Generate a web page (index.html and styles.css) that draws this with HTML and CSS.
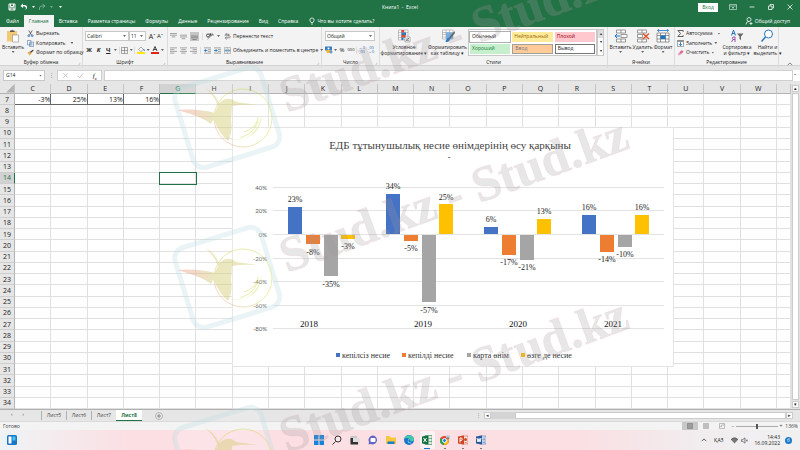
FILE: index.html
```html
<!DOCTYPE html>
<html lang="ru">
<head>
<meta charset="utf-8">
<meta name="viewport" content="width=device-width, initial-scale=1">
<title>Книга1 - Excel</title>
<link rel="stylesheet" href="styles.css">
</head>
<body>
<header class="titlebar">
  <div class="quick">
    <button aria-label="Сохранить"><svg class="i8" viewBox="0 0 16 16"><path d="M2 2h12v12H2zM5 2v5h6V2M4 14v-4h8v4" fill="none" stroke="#fff" stroke-width="2"/></svg></button>
    <button aria-label="Отменить"><svg class="i8" viewBox="0 0 16 16"><path d="M6 1L1 6l5 4V7c5-1 7 1 5 7 6-6 3-11-5-10z" fill="#fff"/></svg></button>
    <i class="tri light"></i>
    <button class="dim" aria-label="Повторить"><svg class="i8" viewBox="0 0 16 16"><path d="M9 2l5 4-5 4M14 6H7q-6 1-4 8" fill="none" stroke="#fff" stroke-width="2"/></svg></button>
    <i class="tri light dim"></i>
    <i class="tri light more"></i>
  </div>
  <div class="doc">Книга1 &nbsp;-&nbsp; Excel</div>
  <div class="win">
    <button class="login">Вход</button>
    <button aria-label="Параметры ленты"><svg class="i8" viewBox="0 0 16 16"><path d="M1 3h14v10H1zM1 6h14M8 12V8M6 10l2-2 2 2" fill="none" stroke="#fff"/></svg></button>
    <button aria-label="Свернуть"><svg class="i8" viewBox="0 0 16 16"><path d="M3 8h10" stroke="#fff" stroke-width="1.500"/></svg></button>
    <button aria-label="Окно"><svg class="i8" viewBox="0 0 16 16"><path d="M3 6h7v7H3zM6 6V3h7v7h-3" fill="none" stroke="#fff" stroke-width="1.500"/></svg></button>
    <button aria-label="Закрыть"><svg class="i8" viewBox="0 0 16 16"><path d="M3 3l10 10M13 3L3 13" stroke="#fff" stroke-width="1.500"/></svg></button>
  </div>
</header>
<nav class="tabs">
  <a href="#">Файл</a><a href="#" class="on">Главная</a><a href="#">Вставка</a><a href="#">Разметка страницы</a><a href="#">Формулы</a><a href="#">Данные</a><a href="#">Рецензирование</a><a href="#">Вид</a><a href="#">Справка</a>
  <a href="#" class="tell"><svg class="i8" viewBox="0 0 16 16"><path d="M6 11Q3 8 4 4q4-5 8 0 1 4-2 7zM6 14h4" fill="none" stroke="#fff" stroke-width="1.500"/></svg>Что вы хотите сделать?</a>
  <a href="#" class="share"><svg class="i8" viewBox="0 0 16 16"><circle cx="8" cy="5" r="4" fill="none" stroke="#fff" stroke-width="1.500"/><path d="M2 15q0-6 6-6M9 13h6M12 10v6" fill="none" stroke="#fff" stroke-width="1.500"/></svg>Общий доступ</a>
</nav>
<main class="ribbon">
  <section class="group">
    <div class="body clip">
      <button class="big"><svg class="i14" viewBox="0 0 28 28"><rect x="2" y="4" width="20" height="21" fill="#f3c876"/><path d="M8 6V3h3q1-3 3 0h3v3z" fill="#555"/><path d="M13 12h12v14H13z" fill="#fff" stroke="#777"/></svg>Вставить<i class="tri"></i></button>
      <div class="stack">
        <button><svg class="i7" viewBox="0 0 16 16"><path d="M4 1l6 10M12 1L6 11" stroke="#555" stroke-width="2"/><circle cx="4" cy="13" r="2" fill="none" stroke="#2b6cb0" stroke-width="2"/><circle cx="12" cy="13" r="2" fill="none" stroke="#2b6cb0" stroke-width="2"/></svg>Вырезать</button>
        <button><svg class="i7" viewBox="0 0 16 16"><path d="M1 1h8v10H1zM6 5h9v10H6z" fill="#fff" stroke="#567ca8" stroke-width="1.500"/><path d="M8 9h5M8 12h5" stroke="#2b6cb0"/></svg>Копировать<i class="tri gap"></i></button>
        <button><svg class="i7" viewBox="0 0 16 16"><path d="M1 8l6-3 3 6-4 4z" fill="#e9a94b"/><path d="M7 6l7-5 1 3-6 5z" fill="#444"/></svg>Формат по образцу</button>
      </div>
    </div>
    <h2>Буфер обмена</h2>
  </section>
  <section class="group">
    <div class="body rows">
      <div class="line"><label class="sel grow"><select aria-label="Шрифт"><option>Calibri</option></select></label><label class="sel size"><select aria-label="Размер"><option>11</option></select></label><button class="let big-a">A<sup>ˆ</sup></button><button class="let">A<sup>ˇ</sup></button></div>
      <div class="line spread"><button class="let"><b>Ж</b></button><button class="let"><b><em>К</em></b></button><button class="let"><b><u>Ч</u></b></button><i class="tri"></i><span class="vr"></span><button aria-label="Границы"><svg class="i7" viewBox="0 0 16 16"><path d="M1 1h14v14H1zM8 1v14M1 8h14" fill="none" stroke="#777" stroke-width="1.500"/></svg></button><i class="tri"></i><span class="vr"></span><button aria-label="Заливка"><svg class="i8" viewBox="0 0 16 16"><path d="M3 7l5-5 5 5-5 4z" fill="#fff" stroke="#555"/><path d="M13 6q3 3 1 4" stroke="#2b6cb0" fill="none" stroke-width="2"/><path d="M0 12h16v4H0z" fill="#ffe800"/></svg></button><i class="tri"></i><button aria-label="Цвет текста"><svg class="i8" viewBox="0 0 16 16"><path d="M4 10l4-9 4 9M5 7h6" fill="none" stroke="#444" stroke-width="2"/><path d="M0 12h16v4H0z" fill="#e32119"/></svg></button><i class="tri"></i></div>
    </div>
    <h2>Шрифт</h2>
  </section>
  <section class="group">
    <div class="body align">
      <div class="rows">
        <div class="line loose"><button aria-label="По верхнему краю"><svg class="i7" viewBox="0 0 16 16"><path d="M0 1h16M0 5h16M4 9h8" stroke="#777" stroke-width="1.500"/></svg></button><button aria-label="По середине"><svg class="i7" viewBox="0 0 16 16"><path d="M0 5h16M0 9h16M4 13h8" stroke="#777" stroke-width="1.500"/></svg></button><button class="pressed" aria-label="По нижнему краю"><svg class="i7" viewBox="0 0 16 16"><path d="M0 7h16M0 11h16M3 15h10" stroke="#666" stroke-width="1.500"/></svg></button><span class="vr"></span><button aria-label="Ориентация"><svg class="i8" viewBox="0 0 16 16"><path d="M3 14L14 4M10 4h4v4" fill="none" stroke="#666" stroke-width="1.500"/><circle cx="4" cy="7" r="3" fill="none" stroke="#444" stroke-width="2"/><path d="M8 2l2 6" stroke="#444" stroke-width="2"/></svg></button><i class="tri"></i></div>
        <div class="line loose"><button aria-label="Слева"><svg class="i7" viewBox="0 0 16 16"><path d="M0 2h16M0 6h10M0 10h16M0 14h10" stroke="#777" stroke-width="1.500"/></svg></button><button aria-label="По центру"><svg class="i7" viewBox="0 0 16 16"><path d="M0 2h16M3 6h10M0 10h16M3 14h10" stroke="#777" stroke-width="1.500"/></svg></button><button aria-label="Справа"><svg class="i7" viewBox="0 0 16 16"><path d="M0 2h16M6 6h10M0 10h16M6 14h10" stroke="#777" stroke-width="1.500"/></svg></button><span class="vr"></span><button aria-label="Уменьшить отступ"><svg class="i7" viewBox="0 0 16 16"><path d="M0 2h16M9 6h7M9 10h7M0 14h16" stroke="#777" stroke-width="1.500"/><path d="M8 8H1M4 5L1 8l3 3" fill="none" stroke="#1672c4" stroke-width="2"/></svg></button><button aria-label="Увеличить отступ"><svg class="i7" viewBox="0 0 16 16"><path d="M0 2h16M9 6h7M9 10h7M0 14h16" stroke="#777" stroke-width="1.500"/><path d="M0 8h7M4 5l3 3-3 3" fill="none" stroke="#1672c4" stroke-width="2"/></svg></button></div>
      </div>
      <div class="rows wraps">
        <div class="line"><button><svg class="i7" viewBox="0 0 16 16"><path d="M2 7l3-6 2 6M9 1v6q4 0 3-3H9M3 11h9q3 0 2-4M6 8l-3 3 3 4" fill="none" stroke="#555" stroke-width="1.500"/></svg>Перенести текст</button></div>
        <div class="line"><button><svg class="i7" viewBox="0 0 16 16"><path d="M1 1h14v14H1zM1 5h14M1 11h14M8 1v4M8 11v4" fill="#fff" stroke="#777"/><path d="M3 8h10M5 6L3 8l2 2M11 6l2 2-2 2" fill="none" stroke="#1672c4" stroke-width="1.500"/></svg>Объединить и поместить в центре<i class="tri"></i></button></div>
      </div>
    </div>
    <h2>Выравнивание</h2>
  </section>
  <section class="group">
    <div class="body rows num">
      <div class="line"><label class="sel grow"><select aria-label="Числовой формат"><option>Общий</option></select></label></div>
      <div class="line spread"><button aria-label="Денежный формат"><svg class="i8" viewBox="0 0 16 16"><rect y="1" width="14" height="8" fill="#3c7fc0"/><circle cx="7" cy="5" r="2" fill="#fff"/><path d="M3 8h7v6H3z" fill="#f2b632"/><path d="M12 9v6M9 12h6" stroke="#3c7fc0" stroke-width="2"/></svg></button><i class="tri"></i><button class="let">%</button><button class="let tiny">000</button><span class="vr"></span><button class="let tiny blue">←0<br>,00</button><button class="let tiny blue">,00<br>→0</button></div>
    </div>
    <h2>Число</h2>
  </section>
  <section class="group">
    <div class="body styles">
      <button class="big"><svg class="i14" viewBox="0 0 28 28"><path d="M3 2h19v20H3zM3 7h19M3 12h19M3 17h19M9 2v20M16 2v20" fill="#fff" stroke="#888"/><path d="M9 2h5v5H9zM9 12h8v5H9z" fill="#e0492f"/><path d="M9 7h9v5H9zM9 17h4v5H9z" fill="#3578bd"/><path d="M16 16h10v10H16z" fill="#fff" stroke="#666"/><path d="M18 23l6-5M18 20h6M18 23h6" stroke="#444"/></svg>Условное<br>форматирование&nbsp;▾</button>
      <button class="big"><svg class="i14" viewBox="0 0 28 28"><path d="M3 2h21v18H3zM3 7h21M3 11h21M3 16h21M10 2v18M17 2v18" fill="#fff" stroke="#888"/><path d="M10 7h14v13H10z" fill="#78aede"/><path d="M27 4L16 17l3 2L28 8z" fill="#666"/><path d="M16 17q-6 2-7 9 8 1 10-7z" fill="#2d77bd"/></svg>Форматировать<br>как таблицу&nbsp;▾</button>
      <div class="gallery">
        <button class="cur">Обычный</button><button class="neutral">Нейтральный</button><button class="bad">Плохой</button>
        <button class="good">Хороший</button><button class="input">Ввод</button><button class="output">Вывод</button>
      </div>
      <div class="updown"><button aria-label="Вверх">▴</button><button aria-label="Вниз">▾</button><button aria-label="Ещё">▾</button></div>
    </div>
    <h2>Стили</h2>
  </section>
  <section class="group">
    <div class="body cells">
      <button class="big"><svg class="i14" viewBox="0 0 28 28"><path d="M5 2h18v6H5zM14 2v6M5 20h18v6H5zM14 20v6M14 11h12v6H14z" fill="#fff" stroke="#777" stroke-width="1.500"/><path d="M12 14H2M6 10l-4 4 4 4" fill="none" stroke="#1672c4" stroke-width="2"/></svg>Вставить<i class="tri"></i></button>
      <button class="big"><svg class="i14" viewBox="0 0 28 28"><path d="M3 2h18v6H3zM12 2v6M3 20h18v6H3zM12 20v6M3 11h10v6H3z" fill="#fff" stroke="#777" stroke-width="1.500"/><path d="M14 9l12 11M26 9L14 20" stroke="#e3522b" stroke-width="3"/></svg>Удалить<i class="tri"></i></button>
      <button class="big"><svg class="i14" viewBox="0 0 28 28"><path d="M2 8h24v18H2zM2 13h24M2 20h24M9 8v18M19 8v18" fill="#fff" stroke="#777" stroke-width="1.500"/><path d="M9 13h10v7H9z" fill="#1672c4"/><path d="M3 3h22M6 0L3 3l3 3M22 0l3 3-3 3" fill="none" stroke="#1672c4" stroke-width="1.500"/></svg>Формат<i class="tri"></i></button>
    </div>
    <h2>Ячейки</h2>
  </section>
  <section class="group">
    <div class="body edit">
      <div class="stack">
        <button><svg class="i7" viewBox="0 0 16 16"><path d="M14 4V1H2l6 7-6 7h12v-3" fill="none" stroke="#444" stroke-width="2"/></svg>Автосумма<i class="tri gap"></i></button>
        <button><svg class="i7" viewBox="0 0 16 16"><path d="M1 1h14v14H1z" fill="#fff" stroke="#777" stroke-width="1.500"/><path d="M1 1h14v3H1z" fill="#777"/><path d="M8 5v8M4 9l4 4 4-4" fill="none" stroke="#1672c4" stroke-width="2"/></svg>Заполнить<i class="tri"></i></button>
        <button><svg class="i7" viewBox="0 0 16 16"><path d="M5 8l6-6 4 4-6 6z" fill="#d96a92"/><path d="M5 8l4 4-3 2H3l-1-3z" fill="#e8a0b8"/></svg>Очистить<i class="tri"></i></button>
      </div>
      <button class="big"><svg class="i14" viewBox="0 0 28 28"><path d="M3 13L7 2l4 11M4 9h6" fill="none" stroke="#2775bd" stroke-width="2"/><path d="M10 26V16H6q-3 3 0 5h4M6 21l-3 5" fill="none" stroke="#9650a8" stroke-width="2"/><path d="M14 9h13l-5 6v7l-3-2v-5z" fill="#666"/></svg>Сортировка<br>и фильтр&nbsp;▾</button>
      <button class="big"><svg class="i14" viewBox="0 0 28 28"><circle cx="17" cy="10" r="8" fill="#fff" stroke="#2d77bd" stroke-width="2"/><path d="M11 16L3 25" stroke="#2d77bd" stroke-width="3"/></svg>Найти и<br>выделить&nbsp;▾</button>
    </div>
    <h2>Редактирование</h2>
  </section>
  <button class="collapse" aria-label="Свернуть ленту"><svg class="i6" viewBox="0 0 16 16"><path d="M2 11l6-6 6 6" fill="none" stroke="#555" stroke-width="2"/></svg></button>
</main>
<div class="formula">
  <label class="sel name"><select aria-label="Поле имени"><option>G14</option></select></label>
  <span class="dots">⋮</span>
  <div class="fx"><svg class="i7" viewBox="0 0 16 16"><path d="M3 3l10 10M13 3L3 13" stroke="#aaa" stroke-width="1.500"/></svg><svg class="i7" viewBox="0 0 16 16"><path d="M2 9l4 4 8-10" fill="none" stroke="#aaa" stroke-width="1.500"/></svg><em>f<sub>x</sub></em></div>
  <input class="entry" aria-label="Строка формул"><span class="drop">⌄</span>
</div>
<div class="work">
  <div class="sheet">
    <table id="grid"></table>
    <figure class="chart">
      <svg id="chart" viewBox="0 0 440 238" role="img" aria-label="ЕДБ тұтынушылық несие өнімдерінің өсу қарқыны"></svg>
    </figure>
  </div>
  <div class="vscroll"><button aria-label="Вверх">▴</button><div class="thumb"></div><button aria-label="Вниз">▾</button></div>
</div>
<div class="sheets">
  <div class="nav"><span>‹</span><span>›</span></div>
  <a href="#">Лист5</a><a href="#">Лист6</a><a href="#">Лист7</a><a href="#" class="on">Лист8</a>
  <button class="add" aria-label="Новый лист"><svg class="i8" viewBox="0 0 16 16"><circle cx="8" cy="8" r="7" fill="none" stroke="#888"/><path d="M8 4v8M4 8h8" stroke="#777" stroke-width="1.500"/></svg></button>
  <div class="hscroll"><span class="dots">⋮</span><button aria-label="Влево">◂</button><div class="track"><div class="thumb"></div></div><button aria-label="Вправо">▸</button></div>
</div>
<div class="status">
  <span class="ready">Готово</span>
  <button class="view on" aria-label="Обычный"><svg class="i6" viewBox="0 0 12 12"><path d="M1 1h10v10H1zM1 4h10M1 8h10M4 1v10M8 1v10" fill="none" stroke="#666"/></svg></button>
  <button class="view" aria-label="Разметка страницы"><svg class="i6" viewBox="0 0 12 12"><path d="M1 1h10v10H1zM3 3h6v6H3zM4 5h4M4 7h4" fill="none" stroke="#888"/></svg></button>
  <button class="view" aria-label="Страничный"><svg class="i6" viewBox="0 0 12 12"><path d="M1 1h10v10H1zM1 7h4V4h6" fill="none" stroke="#888"/></svg></button>
  <span class="sign">−</span><input type="range" min="10" max="262" value="136" aria-label="Масштаб"><span class="sign">+</span><span class="zoom">136%</span>
</div>
<footer class="taskbar">
  <div class="left"><svg class="i10" viewBox="0 0 20 20"><rect width="20" height="20" rx="3" fill="#1878c8"/><path d="M3 3h6v14H3z" fill="#fff"/><path d="M11 3h6v8h-6z" fill="#4cc2f5"/></svg></div>
  <div class="apps">
    <button aria-label="Пуск"><svg class="i10" viewBox="0 0 20 20"><path d="M0 0h9v9H0zM11 0h9v9h-9zM0 11h9v9H0zM11 11h9v9h-9z" fill="#1683d8"/></svg></button>
    <button aria-label="Поиск"><svg class="i10" viewBox="0 0 20 20"><circle cx="12" cy="8" r="6" fill="#f7e8ea" stroke="#333" stroke-width="2"/><path d="M7 13l-6 6" stroke="#333" stroke-width="2"/></svg></button>
    <button aria-label="Представление задач"><svg class="i10" viewBox="0 0 20 20"><path d="M6 6h13v13H6z" fill="#ddd"/><path d="M1 2h13v4H6v9H1z" fill="#c8c8c8"/><path d="M1 6h5v8h10v5H1z" fill="#333"/></svg></button>
    <button aria-label="Чат"><svg class="i10" viewBox="0 0 20 20"><path d="M10 1a9 9 0 1 1-5 17l-4 1 1-5A9 9 0 0 1 10 1z" fill="#6264c7"/><rect x="5" y="6" width="10" height="8" rx="2" fill="#fff"/></svg></button>
    <button aria-label="Проводник"><svg class="i10" viewBox="0 0 20 20"><path d="M0 2h7l2 3h11v13H0z" fill="#f7c83d"/><path d="M3 13h14v5H3z" fill="#1b7bd0"/></svg></button>
    <button aria-label="Edge"><svg class="i10" viewBox="0 0 20 20"><circle cx="10" cy="10" r="10" fill="#1477c9"/><path d="M1 7C4-3 20-1 20 9c0 4-5 5-8 3 3-5-5-8-11-5z" fill="#42c9a8"/><path d="M12 8c-5 0-6 8 4 8-4 2-10-1-8-6 1-2 3-3 4-2z" fill="#fff"/></svg></button>
    <button class="run on" aria-label="Excel"><svg class="i10" viewBox="0 0 20 20"><path d="M6 1h14v18H6z" fill="#dbeee3" stroke="#217346"/><path d="M13 1v18M13 7h7M13 13h7" stroke="#217346"/><path d="M0 3l12-2v18L0 17z" fill="#15713f"/><path d="M3 6l6 8M9 6l-6 8" stroke="#fff" stroke-width="2"/></svg></button>
    <button class="run" aria-label="Chrome"><svg class="i10" viewBox="0 0 20 20"><circle cx="9" cy="11" r="9" fill="#e8402f"/><path d="M9 11L1 6a9 9 0 0 0 8 14z" fill="#2ba24c"/><path d="M9 11l-1 9a9 9 0 0 0 9-12z" fill="#fbc116"/><circle cx="9" cy="11" r="4" fill="#2f7de0" stroke="#fff" stroke-width="2"/><circle cx="16" cy="4" r="4" fill="#bcc9d4"/><path d="M13 7q3-4 6 0" fill="#345"/></svg></button>
    <button class="run" aria-label="PowerPoint"><svg class="i10" viewBox="0 0 20 20"><path d="M7 2h13v16H7z" fill="#fbe4dc" stroke="#d04526"/><circle cx="15" cy="9" r="3" fill="#d04526"/><path d="M13 15h5" stroke="#d04526"/><path d="M0 3l12-2v18L0 17z" fill="#d04526"/><path d="M4 15V6h3q3 2 0 5H4" fill="none" stroke="#fff" stroke-width="2"/></svg></button>
    <button class="run" aria-label="Word"><svg class="i10" viewBox="0 0 20 20"><path d="M7 2h13v16H7z" fill="#e3ebf7" stroke="#2b579a"/><path d="M13 6h5M13 9h5M13 12h5M13 15h5" stroke="#2b579a"/><path d="M0 3l12-2v18L0 17z" fill="#2b579a"/><path d="M2 6l2 8 2-7 2 7 2-8" fill="none" stroke="#fff" stroke-width="2"/></svg></button>
  </div>
  <div class="tray">
    <svg class="i6" viewBox="0 0 16 16"><path d="M2 11l6-6 6 6" fill="none" stroke="#333" stroke-width="2"/></svg>
    <span class="lang">ҚАЗ</span>
    <span class="net"><svg class="i7" viewBox="0 0 16 16"><path d="M0 6q8-8 16 0L8 15z" fill="#777"/><path d="M0 6q8-8 16 0" fill="none" stroke="#444" stroke-width="2"/></svg><svg class="i7" viewBox="0 0 16 16"><path d="M1 6h3l5-4v12l-5-4H1zM12 6l3 4M15 6l-3 4" fill="none" stroke="#444" stroke-width="1.500"/></svg></span>
    <time>14:43<br>16.09.2022</time>
    <span class="badge">6</span>
  </div>
</footer>
<svg class="mark" viewBox="0 0 800 450" preserveAspectRatio="none" aria-hidden="true">
  <defs>
    <linearGradient id="ring" x1="1" y1="0" x2="0" y2="1"><stop offset="0.500" stop-color="#d3dc5c"/><stop offset="1" stop-color="#f0a0a0"/></linearGradient>
    <linearGradient id="tail"><stop offset="0" stop-color="#f4a0a0"/><stop offset="1" stop-color="#d8d280"/></linearGradient>
    <g id="emblem">
      <rect x="-45" y="-41" width="90" height="83" rx="11" transform="rotate(-17)" fill="#fff" fill-opacity="0.300" stroke="#bcdde3" stroke-width="5" stroke-opacity="0.600"/>
      <circle cx="16" cy="1" r="29" fill="none" stroke="url(#ring)" stroke-width="1"/>
      <path d="M-50-7Q-30-9-11-4L-16 7Q-24 0-50-7z" fill="url(#tail)"/>
      <path d="M-22-29Q-12-24-8-14Q2-22 9-15L30-12Q14-13 5-11L4 3Q6 15 1 24Q-7 17-12 6Q-17 0-12-5L-9-11Q-12-21-22-29z" fill="#d8d280"/>
      <path d="M2 22Q28 27 35-2Q33 14 23 19Q12 25 2 22z" fill="#d3dc5c"/>
      <path d="M13 21Q31 15 31 0M17 15Q28 11 30 4" fill="none" stroke="#d3dc5c"/>
    </g>
  </defs>
  <g opacity="0.500"><use href="#emblem" x="227" y="117"/><use href="#emblem" x="227" y="277"/><use href="#emblem" x="227" y="457"/></g>
  <g class="marktext">
    <text transform="translate(287 113) rotate(-20)">Stud.kz - Stud.kz</text>
    <text transform="translate(287 273) rotate(-20)">Stud.kz - Stud.kz</text>
    <text transform="translate(287 453) rotate(-20)">Stud.kz - Stud.kz</text>
  </g>
</svg>
<script src="script.js"></script>
</body>
</html>
```
FILE: styles.css
```css
* { box-sizing: border-box; }
body { margin: 0; height: 100vh; display: flex; flex-direction: column; overflow: hidden; font: 5px/7px "Open Sans", "Noto Sans", sans-serif; color: #222; background: #fff; }
button, select, input { font: inherit; color: inherit; margin: 0; padding: 0; border: 0; background: none; border-radius: 0; }
button { display: inline-flex; align-items: center; justify-content: center; gap: 2px; white-space: nowrap; }
a { color: inherit; text-decoration: none; }
svg { display: block; flex: none; }
.i6 { width: 6px; height: 6px; }
.i7 { width: 7px; height: 7px; }
.i8 { width: 8px; height: 8px; }
.i10 { width: 10px; height: 10px; }
.i14 { width: 14px; height: 14px; }
.tri { width: 3px; height: 2px; background: #666; clip-path: polygon(0 0, 100% 0, 50% 100%); flex: none; }
.tri.light { background: #fff; }
.tri.gap { margin-left: 3px; }
.dim { opacity: 0.4; }

.titlebar { height: 14px; flex: none; background: #217346; color: #fff; display: grid; grid-template-columns: 1fr auto 1fr; align-items: center; }
.quick { display: flex; align-items: center; gap: 3px; padding-left: 8px; }
.quick button { margin-right: 1px; }
.more { margin-left: 3px; }
.win { display: flex; justify-content: flex-end; align-items: center; gap: 11px; padding-right: 6px; }
.login { width: 20px; height: 9px; background: #fff; color: #217346; }

.tabs { height: 13px; flex: none; background: #217346; color: #fff; display: flex; padding: 1px 10px 0 1px; }
.tabs a { padding: 0 5px; display: flex; align-items: center; gap: 2px; }
.tabs .on { background: #f3f3f3; color: #217346; }
.tabs .tell { padding-left: 5px; gap: 1px; }
.tabs .share { margin-left: auto; padding: 0; }

.ribbon { height: 39px; flex: none; background: #f3f3f3; border-bottom: 1px solid #d2d2d2; display: grid; grid-template-columns: 83fr 85fr 154fr 58fr 228fr 67fr 104fr 21fr; }
.group { display: flex; flex-direction: column; min-width: 0; border-right: 1px solid #dcdcdc; padding: 1px 0 2px; position: relative; }
.group h2 { font: inherit; text-align: center; margin: 0; }
.group:nth-child(-n+4)::after { content: "⌟"; position: absolute; right: 2px; bottom: 2px; color: #777; }
.body { flex: 1; display: flex; min-height: 0; }
.big { flex-direction: column; gap: 1px; line-height: 6px; justify-content: flex-start; }
.clip { padding-left: 2px; gap: 3px; }
.clip .big { padding-top: 1px; }
.stack { display: flex; flex-direction: column; justify-content: space-between; align-items: flex-start; padding: 1px 0; }
.rows { display: flex; flex-direction: column; justify-content: space-between; padding: 3px 3px 2px 2px; }
.line { display: flex; align-items: center; height: 10px; }
.spread { justify-content: space-between; }
.loose { gap: 3px; }
.vr { width: 1px; height: 7px; background: #ddd; }
.sel { display: flex; align-items: center; position: relative; background: #fff; border: 1px solid #c8c8c8; height: 10px; }
.sel::after { content: ""; position: absolute; right: 2px; width: 3px; height: 2px; background: #666; clip-path: polygon(0 0, 100% 0, 50% 100%); }
.sel select { appearance: none; width: 100%; padding-left: 1px; }
.grow { flex: 1; }
.size { width: 17px; margin-right: 2px; }
.let { font-size: 6px; gap: 0; min-width: 8px; }
.let sup { font-size: 5px; line-height: 1px; }
.big-a { font-size: 7px; }
.tiny { font-size: 4px; line-height: 4px; }
.blue { color: #2870b0; }
.pressed { background: #c5c5c5; padding: 1px; }
.align { gap: 3px; padding-left: 2px; }
.body .rows, .body.rows { padding-bottom: 4px; }
.align .rows { padding-left: 0; padding-right: 0; }
.num { padding-left: 3px; padding-right: 4px; }
.styles { padding: 1px 3px 3px 2px; }
.styles > .big { width: 43px; }
.gallery { flex: 1; display: grid; grid-template-columns: 1fr 1fr 1fr; grid-template-rows: 10px 10px; gap: 2px; background: #fff; border: 1px solid #c8c8c8; padding: 2px 1px; align-content: center; height: 27px; margin-left: -1px; }
.gallery button { justify-content: flex-start; padding-left: 2px; min-width: 0; overflow: hidden; }
.cur { outline: 1px solid #b0b0b0; color: #111; }
.gallery .neutral { background: #ffeb9c; color: #9c6500; }
.gallery .bad { background: #ffc7ce; color: #9c0006; }
.gallery .good { background: #c6efce; color: #217a32; }
.gallery .input { background: #ffcc99; color: #73738c; border: 1px solid #a0a0a0; }
.gallery .output { border: 1px solid #777; }
.styles > .big:first-child { width: 44px; }
.updown { width: 7px; height: 27px; display: grid; border: 1px solid #c8c8c8; background: #fff; }
.updown button { font-size: 4px; line-height: 4px; }
.updown button:first-child { background: #ddd; }
.cells { justify-content: space-around; padding: 1px 1px 0; }
.edit { padding-left: 2px; gap: 2px; }
.edit > .big { padding-top: 1px; flex: 1; }
.body .stack { padding: 2px 0 3px; }
.collapse { align-self: end; padding: 1px 0 1px; }

.formula { height: 18px; flex: none; background: #e6e6e6; display: flex; padding: 4px 0 3px 3px; }
.formula > * { height: 11px; }
.formula .name { width: 42px; padding-left: 1px; }
.dots { width: 12px; text-align: center; line-height: 11px; color: #888; }
.fx { width: 45px; background: #fff; border: 1px solid #d0d0d0; display: flex; align-items: center; justify-content: space-around; font: 7px "Liberation Serif", serif; }
.fx sub { font-size: 5px; line-height: 1px; }
.entry { flex: 1; min-width: 0; background: #fff; border: 1px solid #d0d0d0; margin-left: 2px; }
.drop { background: #fff; width: 7px; }

.work { flex: 1; display: flex; min-height: 0; }
.sheet { flex: 1; position: relative; min-width: 0; overflow: hidden; }
#grid { table-layout: fixed; width: 100%; height: 100%; border-spacing: 0; font-size: 7px; line-height: 9px; color: #222; }
#grid th, #grid td { padding: 0; border-right: 1px solid #e0e0e0; border-bottom: 1px solid #e0e0e0; font-weight: 400; overflow: hidden; }
#grid thead th { background: #e6e6e6; border-right-color: #c4c4c4; border-bottom-color: #b4b4b4; }
#grid tbody th { background: #e6e6e6; border-right-color: #b4b4b4; border-bottom-color: #cecece; }
#grid td { text-align: right; }
#grid .data { border-color: #666; }
#grid thead .hot { background: #d2d2d2; color: #217346; border-bottom: 1px solid #217346; }
#grid tbody .hot { background: #d2d2d2; color: #217346; border-right: 1px solid #217346; }
#grid .picked { outline: 1px solid #217346; }
.rowcol { width: 15px; }
.lastcol { width: 14px; }
.corner { text-align: right; }
.corner i { display: block; width: 8px; height: 8px; margin-left: auto; background: #b4b4b4; clip-path: polygon(100% 0, 100% 100%, 0 100%); }
.chart { position: absolute; left: 233px; top: 44px; width: 440px; margin: 0; background: #fff; outline: 1px solid #e4e4e4; }
.chart svg { width: 100%; }
.axis { font: 6px Lato, sans-serif; fill: #595959; text-anchor: end; }
.value { font: 8px "Liberation Serif", serif; fill: #222; text-anchor: middle; }
.year { font: 9px "Liberation Serif", serif; fill: #111; text-anchor: middle; }
.legend { font: 8px "Liberation Serif", serif; fill: #333; }
.heading { font: 11px "Liberation Serif", serif; fill: #444; text-anchor: middle; }

.vscroll { width: 9px; background: #e2e2e2; display: flex; flex-direction: column; padding: 1px; font-size: 5px; }
.vscroll button, .hscroll button { background: #fff; border: 1px solid #ccc; width: 7px; height: 7px; flex: none; line-height: 5px; }
.vscroll .thumb { flex: 1; margin: 1px 0; background: #fff; border: 1px solid #ccc; }

.sheets { height: 12px; flex: none; background: #e6e6e6; border-top: 1px solid #b0b0b0; display: flex; color: #444; }
.sheets .nav { width: 41px; display: flex; gap: 10px; padding: 1px 0 0 11px; }
.sheets a { width: 25px; border-left: 1px solid #b0b0b0; text-align: center; line-height: 9px; margin: 1px 0; }
.sheets .on { background: #fff; color: #217346; font-weight: 700; border-left: 0; border-bottom: 1px solid #217346; margin: 0; line-height: 11px; width: 26px; }
.add { width: 33px; }
.hscroll { margin-left: auto; width: 41%; display: flex; align-items: center; padding-right: 7px; }
.hscroll .track { flex: 1; height: 7px; background: #d4d4d4; padding-left: 24px; }
.hscroll .thumb { height: 7px; background: #fff; border: 1px solid #ccc; }
.sheets + .status { border-top: 1px solid #dadada; }
.status { height: 9px; flex: none; background: #f3f3f3; display: flex; align-items: center; padding-right: 2px; color: #444; }
.ready { margin: 0 auto 0 3px; }
.view { width: 16px; height: 9px; }
.view.on { background: #c8c8c8; }
.sign { width: 6px; text-align: center; }
.status input { appearance: none; width: 42px; height: 7px; background: linear-gradient(#aaa, #aaa) center / 100% 1px no-repeat; }
.status input::-webkit-slider-thumb { appearance: none; width: 2px; height: 5px; background: #555; }
.zoom { width: 14px; text-align: right; }

.taskbar { height: 20px; flex: none; display: grid; grid-template-columns: 1fr auto 1fr; align-items: center; background: linear-gradient(90deg, #eef3f5 0, #f1f0f2 3%, #fbdfe3 16%, #fbdfe2 72%, #f1edef 88%, #f0f0f1); }
.left { padding-left: 7px; }
.apps { display: flex; gap: 3px; height: 18px; }
.apps button { width: 15px; position: relative; }
.run::after { content: ""; position: absolute; bottom: 0; width: 2px; height: 1px; background: #777; }
.run.on { background: #fff9; border-radius: 2px; }
.run.on::after { width: 6px; background: #1878c8; }
.tray { display: flex; align-items: center; justify-content: flex-end; gap: 7px; padding-right: 8px; color: #222; }
.net { display: flex; gap: 3px; }
.tray time { text-align: right; line-height: 6px; }
.badge { width: 7px; height: 7px; border-radius: 50%; background: #1878c8; color: #fff; text-align: center; margin-left: -2px; }

.mark { position: absolute; inset: 0; width: 100%; height: 100%; pointer-events: none; }
.marktext { font: 700 50px "Liberation Serif", serif; fill: #a09c9d; fill-opacity: 0.24; stroke: #e08a8a; stroke-opacity: 0.1; }
```
FILE: script.js
```js
const letters = "CDEFGHIJKLMNOPQRSTUVW".split("");
const row7 = { C: "-3%", D: "25%", E: "13%", F: "16%" };

let html = '<colgroup><col class="rowcol">' + letters.map(() => "<col>").join("") + '<col class="lastcol"></colgroup>';
html += '<thead><tr><th class="corner"><i></i></th>';
html += letters.map(l => `<th scope="col"${l === "G" ? ' class="hot"' : ""}>${l}</th>`).join("") + "<th></th></tr></thead><tbody>";
for (let r = 7; r <= 34; r++) {
  html += `<tr><th scope="row"${r === 14 ? ' class="hot"' : ""}>${r}</th>`;
  for (const l of letters) {
    const text = r === 7 ? row7[l] || "" : "";
    const cls = text ? ' class="data"' : r === 14 && l === "G" ? ' class="picked"' : "";
    html += `<td${cls}>${text}</td>`;
  }
  html += "<td></td></tr>";
}
document.getElementById("grid").innerHTML = html + "</tbody>";

/* Chart: bars hang from the zero line, labels carry their own positions. */
const zero = 106;
const unit = 1.18;
const colors = ["#4472c4", "#ed7d31", "#a5a5a5", "#ffc000"];
const groups = [
  { year: 2018, yearX: 76, x: 55, v: [23, -8, -35, -3], ly: [74, 127, 159, 121] },
  { year: 2019, yearX: 190, x: 153, v: [34, -5, -57, 25], ly: [61, 123, 185, 72] },
  { year: 2020, yearX: 285, x: 251, v: [6, -17, -21, 13], ly: [94, 137, 142, 86] },
  { year: 2021, yearX: 380, x: 349, v: [16, -14, -10, 16], ly: [82, 134, 129, 82] }
];
const offsets = [0, 18, 36, 53];
let out = "";
for (let p = 40; p >= -80; p -= 20) {
  const y = Math.round(zero - p * unit);
  out += `<path d="M40 ${y + 0.5}H431" stroke="#e3e3e3"/><text class="axis" x="34" y="${y + 3}">${p}%</text>`;
}
for (const g of groups) {
  g.v.forEach((v, i) => {
    const h = Math.round(Math.abs(v) * unit);
    const x = g.x + offsets[i];
    out += `<rect x="${x}" y="${v > 0 ? zero - h : zero + 1}" width="14" height="${h}" fill="${colors[i]}"/>`;
    out += `<text class="value" x="${x + 7}" y="${g.ly[i]}">${v}%</text>`;
  });
  out += `<text class="year" x="${g.yearX}" y="199">${g.year}</text>`;
}
[["кепілсіз несие", 103], ["кепілді несие", 169], ["карта өнім", 234], ["өзге де несие", 288]].forEach(([name, x], i) => {
  out += `<rect x="${x}" y="225" width="4" height="4" fill="${colors[i]}"/><text class="legend" x="${x + 6}" y="230">${name}</text>`;
});
out += '<text class="heading" x="217" y="21">ЕДБ тұтынушылық несие өнімдерінің өсу қарқыны</text><text class="value" x="216" y="32">-</text>';
document.getElementById("chart").innerHTML = out;
```
